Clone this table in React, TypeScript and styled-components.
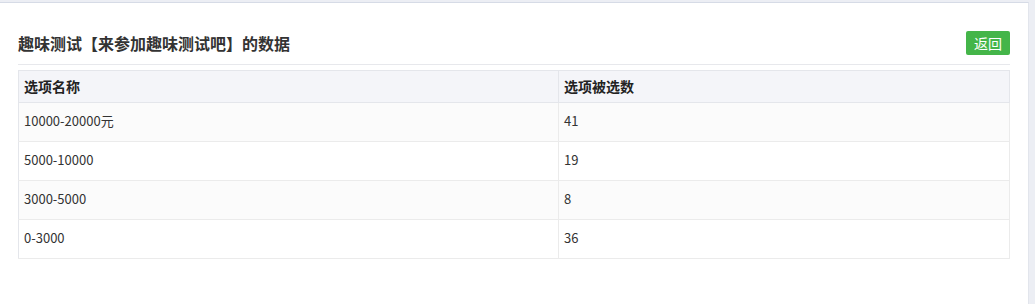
import styled, { createGlobalStyle } from 'styled-components';

const GlobalStyle = createGlobalStyle`
  html, body {
    margin: 0;
    padding: 0;
    background: #ffffff;
    font-family: "Noto Sans CJK SC", "Liberation Sans", sans-serif;
    color: #333;
  }
`;

const rows = [
  { name: '10000-20000元', count: 41 },
  { name: '5000-10000', count: 19 },
  { name: '3000-5000', count: 8 },
  { name: '0-3000', count: 36 },
];

const Page = styled.div`
  display: flex;
  height: 304px;
  background: #eceef4;
`;

const Panel = styled.div`
  width: 1029px;
  margin-top: 2px;
  background: #fff;
  border-top: 1px solid #d6dbe6;
  border-right: 1px solid #e2e5ec;
  padding: 0 18px 0 18px;
  box-sizing: border-box;
`;

const Head = styled.div`
  display: flex;
  align-items: center;
  justify-content: space-between;
  padding: 28px 0 9px;
  border-bottom: 1px solid #e7e8ec;
`;

const Title = styled.h2`
  margin: 0;
  font-size: 16px;
  font-weight: bold;
  color: #333;
  line-height: 24px;
`;

const BackButton = styled.button`
  height: 24px;
  width: 44px;
  padding: 0;
  border: none;
  border-radius: 2px;
  background: #44b549;
  color: #fff;
  font-family: inherit;
  font-size: 14px;
  line-height: 24px;
`;

const Table = styled.table`
  width: 100%;
  margin-top: 5px;
  border-collapse: collapse;
  border: 1px solid #e4e6eb;
  font-size: 13px;
`;

const Th = styled.th`
  height: 30px;
  padding: 0 5px 1px;
  text-align: left;
  font-size: 14px;
  font-weight: bold;
  color: #222;
  background: #f4f5f9;
  border-bottom: 1px solid #e4e6eb;
  border-right: 1px solid #e4e6eb;
`;

const Tr = styled.tr<{ $striped: boolean }>`
  background: ${p => (p.$striped ? '#fbfbfb' : '#fff')};
`;

const Td = styled.td`
  height: 35px;
  padding: 0 5px 3px;
  color: #333;
  border-bottom: 1px solid #ebebeb;
  border-right: 1px solid #ebebeb;
  &:first-child {
    width: 529px;
  }
`;

export default function App() {
  return (
    <>
      <GlobalStyle />
      <Page>
        <Panel>
          <Head>
            <Title>趣味测试【来参加趣味测试吧】的数据</Title>
            <BackButton>返回</BackButton>
          </Head>
          <Table>
            <thead>
              <tr>
                <Th>选项名称</Th>
                <Th>选项被选数</Th>
              </tr>
            </thead>
            <tbody>
              {rows.map((row, i) => (
                <Tr key={row.name} $striped={i % 2 === 0}>
                  <Td>{row.name}</Td>
                  <Td>{row.count}</Td>
                </Tr>
              ))}
            </tbody>
          </Table>
        </Panel>
      </Page>
    </>
  );
}
